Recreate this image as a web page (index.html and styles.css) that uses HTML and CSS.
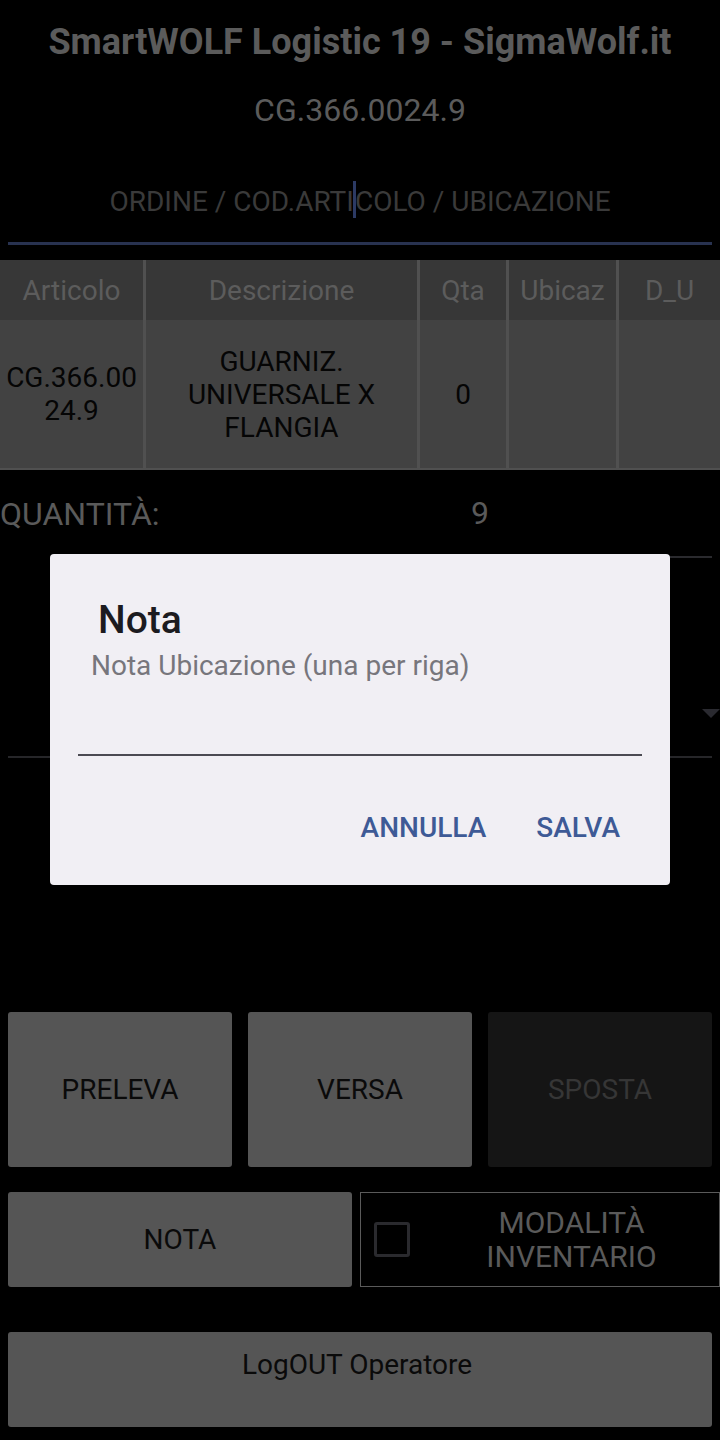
FILE: index.html
```html
<!DOCTYPE html>
<html lang="it">
<head>
    <meta charset="UTF-8">
    <meta name="viewport" content="width=device-width, initial-scale=1.0">
    <title>SmartWOLF Logistic</title>
    <link rel="stylesheet" href="styles.css">
</head>
<body>
    <header class="app-header">
        <h1 class="app-title">SmartWOLF Logistic 19 - SigmaWolf.it</h1>
        <div class="app-code">CG.366.0024.9</div>
    </header>

    <div class="search">
        <span class="search-hint">ORDINE / COD.ARTI<span class="caret"></span>COLO / UBICAZIONE</span>
    </div>

    <table class="items">
        <thead>
            <tr>
                <th class="col-art">Articolo</th>
                <th class="col-desc">Descrizione</th>
                <th class="col-qta">Qta</th>
                <th class="col-ubi">Ubicaz</th>
                <th class="col-du">D_U</th>
            </tr>
        </thead>
        <tbody>
            <tr>
                <td>CG.366.00<br>24.9</td>
                <td>GUARNIZ.<br>UNIVERSALE X<br>FLANGIA</td>
                <td>0</td>
                <td></td>
                <td></td>
            </tr>
        </tbody>
    </table>

    <div class="qty-row">
        <span class="qty-label">QUANTITÀ:</span>
        <span class="qty-value">9</span>
    </div>

    <div class="spinner">
        <span class="spinner-arrow"></span>
    </div>

    <div class="actions">
        <button class="btn">PRELEVA</button>
        <button class="btn">VERSA</button>
        <button class="btn btn-disabled">SPOSTA</button>
    </div>

    <div class="actions-2">
        <button class="btn btn-nota">NOTA</button>
        <label class="check-box">
            <span class="check"></span>
            <span class="check-text">MODALITÀ<br>INVENTARIO</span>
        </label>
    </div>

    <button class="btn btn-logout">LogOUT Operatore</button>

    <!-- dialog nota -->
    <div class="dialog">
        <div class="dialog-title">Nota</div>
        <div class="dialog-hint">Nota Ubicazione (una per riga)</div>
        <div class="dialog-input"></div>
        <div class="dialog-buttons">
            <span class="dialog-btn">ANNULLA</span>
            <span class="dialog-btn">SALVA</span>
        </div>
    </div>
</body>
</html>
```

FILE: styles.css
```css
body {
    margin: 0;
    padding: 0;
    width: 720px;
    height: 1440px;
    overflow: hidden;
    background: #000;
    font-family: Roboto, "Noto Sans", sans-serif;
    position: relative;
}

.app-header {
    text-align: center;
    color: #5b5b5b;
}

.app-title {
    margin: 0;
    height: 84px;
    line-height: 84px;
    font-size: 36px;
    font-weight: bold;
}

.app-code {
    height: 52px;
    line-height: 52px;
    font-size: 32px;
}

.search {
    margin: 0 8px 15px;
    height: 85px;
    padding-top: 21px;
    border-bottom: 3px solid #283250;
    display: flex;
    align-items: center;
    justify-content: center;
}

.search-hint {
    font-size: 28px;
    color: #3a3a3a;
}

.caret {
    display: inline-block;
    width: 3px;
    height: 37px;
    margin: 0 -1px -7px -1px;
    background: #2c3a64;
}

table.items {
    width: 720px;
    border-collapse: separate;
    border-spacing: 0;
    table-layout: fixed;
    font-size: 28px;
    border-bottom: 2px solid #505050;
}

.items th, .items td {
    box-sizing: border-box;
    padding: 0;
    text-align: center;
    border-left: 3px solid #505050;
}

.items th:first-child, .items td:first-child {
    border-left: none;
}

.items th {
    height: 60px;
    background: #373737;
    color: #5c5c5c;
    font-weight: normal;
}

.items td {
    height: 148px;
    background: #424242;
    color: #050505;
    line-height: 33px;
}

.col-art { width: 143px; }
.col-desc { width: 274px; }
.col-qta { width: 89px; }
.col-ubi { width: 110px; }
.col-du { width: 104px; }

.qty-row {
    display: flex;
    align-items: center;
    height: 88px;
    font-size: 32px;
    color: #5a5a5a;
}

.qty-label {
    width: 248px;
}

.qty-value {
    flex: 1;
    margin-right: 8px;
    align-self: stretch;
    display: flex;
    align-items: center;
    justify-content: center;
    border-bottom: 2px solid #2a2a2e;
}

.spinner {
    height: 160px;
    margin: 0 8px;
    padding-bottom: 38px;
    border-bottom: 2px solid #262629;
    display: flex;
    justify-content: flex-end;
    align-items: flex-end;
}

.spinner-arrow {
    width: 0;
    height: 0;
    margin-right: -8px;
    border-left: 9px solid transparent;
    border-right: 9px solid transparent;
    border-top: 9px solid #2a2a30;
}

.btn {
    font-family: Roboto, "Noto Sans", sans-serif;
    font-size: 28px;
    color: #0a0a0a;
    background: #555555;
    border: none;
    border-radius: 3px;
    padding: 0;
}

.actions {
    margin: 254px 8px 0;
    display: grid;
    grid-template-columns: repeat(3, 1fr);
    gap: 16px;
    height: 155px;
}

.btn-disabled {
    background: #151515;
    color: #363636;
}

.actions-2 {
    display: flex;
    gap: 8px;
    margin: 25px 0 0 8px;
    height: 95px;
}

.btn-nota {
    width: 344px;
}

.check-box {
    flex: 1;
    display: flex;
    align-items: center;
    border: 1px solid #5a5a5a;
    color: #5a5a5a;
    font-size: 30px;
}

.check {
    width: 30px;
    height: 29px;
    margin-left: 13px;
    border: 3px solid #2a2a2e;
    border-radius: 3px;
}

.check-text {
    flex: 1;
    text-align: center;
    line-height: 34px;
    padding-left: 14px;
}

.btn-logout {
    display: block;
    margin: 45px 8px 0;
    width: 704px;
    height: 95px;
    line-height: 30px;
    padding-bottom: 30px;
    padding-right: 6px;
}

.dialog {
    position: absolute;
    left: 50px;
    top: 554px;
    width: 620px;
    height: 331px;
    background: #f1eff4;
    border-radius: 4px;
    box-sizing: border-box;
    padding: 0 28px;
}

.dialog-title {
    margin: 44px 0 0 20px;
    font-size: 39px;
    font-weight: 500;
    color: #1c1b1f;
    line-height: 44px;
}

.dialog-hint {
    margin: 2px 0 0 13px;
    font-size: 28px;
    color: #77767c;
    line-height: 44px;
}

.dialog-input {
    height: 66px;
    border-bottom: 2px solid #4b4a52;
}

.dialog-buttons {
    display: flex;
    justify-content: flex-end;
    gap: 50px;
    margin-top: 55px;
    padding-right: 22px;
}

.dialog-btn {
    font-size: 28px;
    font-weight: 500;
    color: #3e5a96;
    line-height: 34px;
}
```
